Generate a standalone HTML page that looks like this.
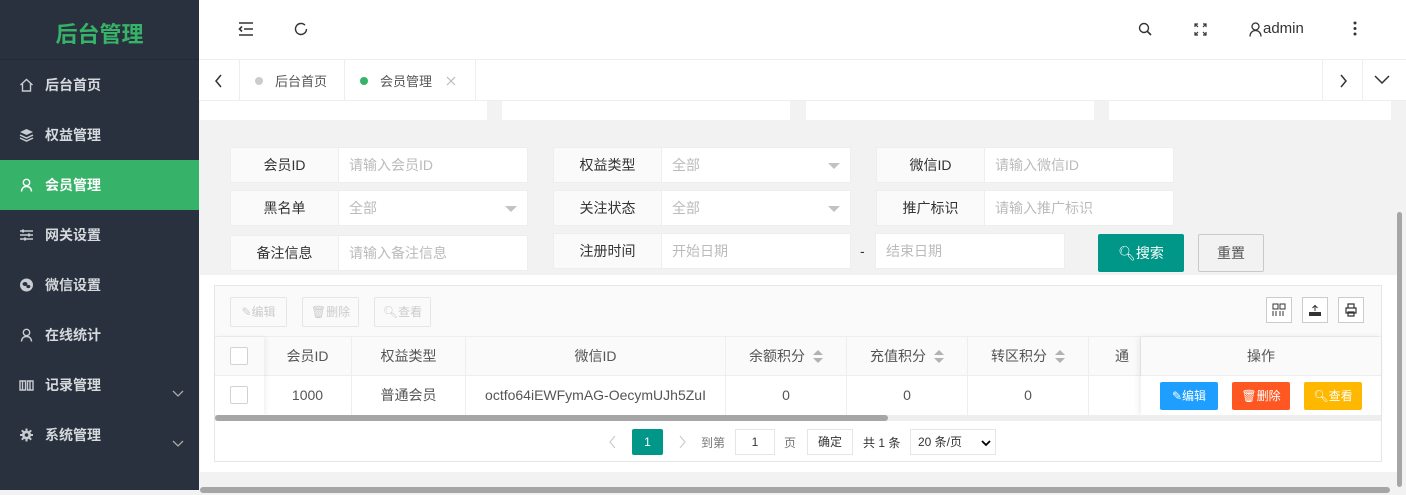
<!DOCTYPE html>
<html><head><meta charset="utf-8"><style>
*{box-sizing:border-box;margin:0;padding:0}
body{width:1406px;height:495px;overflow:hidden;background:#f2f2f2;font-family:"Liberation Sans","Noto Sans CJK SC",sans-serif;font-size:14px;color:#333;position:relative}
.a{position:absolute}
.side{left:0;top:0;width:199px;height:490px;background:#28313d}
.logo{left:0;top:0;width:199px;height:60px;color:#36b368;font-size:22px;font-weight:bold;text-align:center;line-height:70px;border-bottom:1px solid #222a34}
.mi{left:0;width:199px;height:50px;line-height:50px;color:#d6d9dd;font-size:14px;font-weight:bold;padding-left:45px}
.mi svg{position:absolute;left:19px;top:18px}
.mi .ch{position:absolute;left:172px;top:8px}
.act{background:#36b368;color:#fff}
.hdr{left:199px;top:0;width:1207px;height:60px;background:#fff;border-bottom:1px solid #eee}
.tabs{left:199px;top:60px;width:1207px;height:41px;background:#fff;border-bottom:1px solid #eee}
.card{top:101px;height:19px;background:#fff}
.lb{height:36px;background:#fafafa;border:1px solid #eee;text-align:center;line-height:34px;font-size:14px;color:#333}
.in{height:36px;background:#fff;border:1px solid #eee;line-height:34px;padding-left:10px;color:#bbb;font-size:14px}
.sel::after{content:"";position:absolute;right:10px;top:15px;border:6px solid transparent;border-top-color:#c2c2c2}
.th{top:337px;height:39px;border-right:1px solid #eee;border-bottom:1px solid #eee;text-align:center;line-height:39px;color:#555;font-size:14px}
.td{top:376px;height:39px;border-right:1px solid #eee;text-align:center;line-height:39px;color:#555;font-size:14px}
.cb{width:18px;height:18px;border:1px solid #d2d2d2;background:#fff;border-radius:2px}
.tb{top:297px;height:30px;border:1px solid #e6e6e6;color:#ccc;font-size:12px;line-height:28px;text-align:center;border-radius:2px}
.ib{top:297px;width:26px;height:26px;border:1px solid #ccc;background:#fff}
.ob{top:382px;width:58px;height:28px;color:#fff;font-size:12px;line-height:28px;text-align:center;border-radius:2px}
.sort{display:inline-block;vertical-align:middle;margin-left:8px;width:10px;height:14px;position:relative}
.sort::before{content:"";position:absolute;left:0;top:0;border:5px solid transparent;border-top:0;border-bottom:5px solid #b2b2b2}
.sort::after{content:"";position:absolute;left:0;top:8px;border:5px solid transparent;border-bottom:0;border-top:5px solid #b2b2b2}
</style></head><body>
<div class="a side">
<div class="a logo">后台管理</div>
<div class="a mi" style="top:60px"><svg width="15" height="14"><path d="M1.5 7L7.5 1.5 13.5 7M3.5 5.5V13h8V5.5" stroke="#c8ccd2" stroke-width="1.4" fill="none"/></svg>后台首页</div>
<div class="a mi" style="top:110px"><svg width="15" height="14"><path d="M7.5 1L14 4 7.5 7 1 4z" fill="#c8ccd2"/><path d="M1 7l6.5 3 6.5-3M1 10l6.5 3 6.5-3" stroke="#c8ccd2" stroke-width="1.5" fill="none"/></svg>权益管理</div>
<div class="a mi act" style="top:160px"><svg width="15" height="14"><circle cx="7.5" cy="4.5" r="3.2" stroke="#fff" stroke-width="1.4" fill="none"/><path d="M2.5 13.5c0-3 2-5 5-5s5 2 5 5" stroke="#fff" stroke-width="1.4" fill="none"/></svg>会员管理</div>
<div class="a mi" style="top:210px"><svg width="15" height="14"><path d="M1 3h13M1 7h13M1 11h13" stroke="#c8ccd2" stroke-width="1.4"/><path d="M4 1.5v3M10 5.5v3M6 9.5v3" stroke="#c8ccd2" stroke-width="2"/></svg>网关设置</div>
<div class="a mi" style="top:260px"><svg width="15" height="14"><circle cx="7.5" cy="7" r="6.5" fill="#c8ccd2"/><ellipse cx="6" cy="6" rx="2.5" ry="2" fill="#28313d"/><ellipse cx="9.3" cy="8.5" rx="2" ry="1.6" fill="#28313d"/></svg>微信设置</div>
<div class="a mi" style="top:310px"><svg width="15" height="14"><circle cx="7.5" cy="4.5" r="3.2" stroke="#c8ccd2" stroke-width="1.4" fill="none"/><path d="M2.5 13.5c0-3 2-5 5-5s5 2 5 5" stroke="#c8ccd2" stroke-width="1.4" fill="none"/></svg>在线统计</div>
<div class="a mi" style="top:360px"><svg width="15" height="14"><path d="M1 3h5.5v9H1zM8.5 3H14v9H8.5zM3.5 3v9M11 3v9" stroke="#c8ccd2" stroke-width="1.4" fill="none"/></svg>记录管理<svg class="ch" width="12" height="8" style="left:172px;top:30px"><path d="M1 1l5 5 5-5" stroke="#aaa" stroke-width="1.3" fill="none"/></svg></div>
<div class="a mi" style="top:410px"><svg width="15" height="14"><circle cx="7.5" cy="7" r="4.5" fill="#c8ccd2"/><path d="M7.5 0.5v13M1 7h13M2.8 2.3l9.4 9.4M12.2 2.3l-9.4 9.4" stroke="#c8ccd2" stroke-width="2"/><circle cx="7.5" cy="7" r="1.8" fill="#28313d"/></svg>系统管理<svg class="ch" width="12" height="8" style="left:172px;top:30px"><path d="M1 1l5 5 5-5" stroke="#aaa" stroke-width="1.3" fill="none"/></svg></div>
</div>
<div class="a hdr"></div>
<svg class="a" style="left:238px;top:22px" width="16" height="14"><path d="M1 1h14M6 7h9M1 13h14M4 4.5L1.5 7L4 9.5" stroke="#333" stroke-width="1.6" fill="none"/></svg>
<svg class="a" style="left:294px;top:22px" width="14" height="14"><path d="M11 3.2A5.5 5.5 0 1 0 12.5 7" stroke="#333" stroke-width="1.4" fill="none"/></svg>
<svg class="a" style="left:1138px;top:22px" width="14" height="14"><circle cx="6" cy="6" r="4.5" stroke="#333" stroke-width="1.4" fill="none"/><path d="M9.5 9.5L13 13" stroke="#333" stroke-width="1.6"/></svg>
<svg class="a" style="left:1194px;top:23px" width="13" height="13"><path d="M1 4V1h3M9 1h3v3M12 9v3H9M4 12H1V9M1 1l3 3M12 1L9 4M12 12L9 9M1 12l3-3" stroke="#333" stroke-width="1.2" fill="none"/></svg>
<svg class="a" style="left:1249px;top:22px" width="13" height="15"><circle cx="6.5" cy="4.5" r="3.5" stroke="#333" stroke-width="1.3" fill="none"/><path d="M1 14.5c0-3.5 2.3-6 5.5-6s5.5 2.5 5.5 6" stroke="#333" stroke-width="1.3" fill="none"/></svg>
<div class="a" style="left:1263px;top:20px;font-size:15px;color:#333">admin</div>
<svg class="a" style="left:1353px;top:21px" width="4" height="15"><circle cx="2" cy="2" r="1.5" fill="#333"/><circle cx="2" cy="7.5" r="1.5" fill="#333"/><circle cx="2" cy="13" r="1.5" fill="#333"/></svg>
<div class="a tabs"></div>
<div class="a" style="left:239px;top:60px;width:1px;height:41px;background:#eee"></div>
<div class="a" style="left:344px;top:60px;width:1px;height:41px;background:#eee"></div>
<div class="a" style="left:475px;top:60px;width:1px;height:41px;background:#eee"></div>
<div class="a" style="left:1322px;top:60px;width:1px;height:41px;background:#eee"></div>
<div class="a" style="left:1362px;top:60px;width:1px;height:41px;background:#eee"></div>
<svg class="a" style="left:214px;top:74px" width="10" height="14"><path d="M7 1L2 7l5 6" stroke="#333" stroke-width="1.5" fill="none"/></svg>
<svg class="a" style="left:1338px;top:74px" width="10" height="14"><path d="M3 1l5 6-5 6" stroke="#333" stroke-width="1.5" fill="none"/></svg>
<svg class="a" style="left:1374px;top:74px" width="16" height="10"><path d="M1 2l7 7 7-7" stroke="#333" stroke-width="1.5" fill="none"/></svg>
<div class="a" style="left:255px;top:77px;width:8px;height:8px;border-radius:50%;background:#ccc"></div>
<div class="a" style="left:275px;top:71px;font-size:13px;color:#555">后台首页</div>
<div class="a" style="left:360px;top:77px;width:8px;height:8px;border-radius:50%;background:#36b368"></div>
<div class="a" style="left:380px;top:71px;font-size:13px;color:#555">会员管理</div>
<svg class="a" style="left:446px;top:76px" width="10" height="10"><path d="M1 1l8 8M9 1L1 9" stroke="#bbb" stroke-width="1.2"/></svg>
<div class="a card" style="left:200px;width:287px"></div>
<div class="a card" style="left:502px;width:288px"></div>
<div class="a card" style="left:806px;width:288px"></div>
<div class="a card" style="left:1109px;width:282px"></div>

<div class="a lb" style="left:230px;top:147px;width:109px">会员ID</div><div class="a in" style="left:338px;top:147px;width:190px">请输入会员ID</div>
<div class="a lb" style="left:553px;top:147px;width:109px">权益类型</div><div class="a in sel" style="left:661px;top:147px;width:190px">全部</div>
<div class="a lb" style="left:876px;top:147px;width:109px">微信ID</div><div class="a in" style="left:984px;top:147px;width:190px">请输入微信ID</div>
<div class="a lb" style="left:230px;top:190px;width:109px">黑名单</div><div class="a in sel" style="left:338px;top:190px;width:190px">全部</div>
<div class="a lb" style="left:553px;top:190px;width:109px">关注状态</div><div class="a in sel" style="left:661px;top:190px;width:190px">全部</div>
<div class="a lb" style="left:876px;top:190px;width:109px">推广标识</div><div class="a in" style="left:984px;top:190px;width:190px">请输入推广标识</div>
<div class="a lb" style="left:230px;top:235px;width:109px">备注信息</div><div class="a in" style="left:338px;top:235px;width:190px">请输入备注信息</div>
<div class="a lb" style="left:553px;top:233px;width:109px">注册时间</div><div class="a in" style="left:661px;top:233px;width:190px">开始日期</div>
<div class="a" style="left:860px;top:243px;color:#333">-</div>
<div class="a in" style="left:875px;top:233px;width:190px">结束日期</div>
<div class="a" style="left:1098px;top:234px;width:86px;height:38px;background:#009688;color:#fff;line-height:38px;text-align:center;border-radius:2px">🔍︎搜索</div>
<div class="a" style="left:1198px;top:234px;width:66px;height:38px;background:#f2f2f2;border:1px solid #c9c9c9;color:#555;line-height:36px;text-align:center;border-radius:2px">重置</div>
<div class="a" style="left:200px;top:275px;width:1197px;height:197px;background:#fff"></div>
<div class="a" style="left:214px;top:285px;width:1168px;height:177px;border:1px solid #e6e6e6;background:#fff"></div>
<div class="a" style="left:215px;top:286px;width:1166px;height:51px;background:#fafafa;border-bottom:1px solid #eee"></div>
<div class="a tb" style="left:230px;width:57px">✎编辑</div>
<div class="a tb" style="left:302px;width:57px">🗑︎删除</div>
<div class="a tb" style="left:374px;width:57px">🔍︎查看</div>
<div class="a ib" style="left:1266px"></div><div class="a ib" style="left:1302px"></div><div class="a ib" style="left:1338px"></div>
<svg class="a" style="left:1272px;top:303px" width="14" height="14"><path d="M1 1h5v5H1zM8 1h5v5H8zM1 8v5M4 8v5M8 8v5M11 8v5" stroke="#333" fill="none"/></svg>
<svg class="a" style="left:1308px;top:303px" width="14" height="14"><path d="M1 9h12v4H1z" fill="#333"/><path d="M7 8V3M4.5 5L7 2.5 9.5 5" stroke="#333" fill="none"/></svg>
<svg class="a" style="left:1344px;top:303px" width="14" height="14"><path d="M4 5V1h6v4M2 5h10v5H2zM4 9h6v4H4z" stroke="#333" stroke-width="1.2" fill="none"/></svg>
<div class="a th" style="left:264px;width:88px;background:#fafafa">会员ID</div>
<div class="a th" style="left:352px;width:114px;background:#fafafa">权益类型</div>
<div class="a th" style="left:466px;width:260px;background:#fafafa">微信ID</div>
<div class="a th" style="left:726px;width:121px;background:#fafafa">余额积分<span class="sort"></span></div>
<div class="a th" style="left:847px;width:121px;background:#fafafa">充值积分<span class="sort"></span></div>
<div class="a th" style="left:968px;width:121px;background:#fafafa">转区积分<span class="sort"></span></div>
<div class="a th" style="left:1089px;width:52px;background:#fafafa;text-align:left;padding-left:26px;overflow:hidden">通区</div>
<div class="a td" style="left:264px;width:88px">1000</div>
<div class="a td" style="left:352px;width:114px">普通会员</div>
<div class="a td" style="left:466px;width:260px">octfo64iEWFymAG-OecymUJh5ZuI</div>
<div class="a td" style="left:726px;width:121px">0</div>
<div class="a td" style="left:847px;width:121px">0</div>
<div class="a td" style="left:968px;width:121px">0</div>
<div class="a" style="left:215px;top:337px;width:49px;height:78px;background:#fff;box-shadow:2px 0 5px rgba(0,0,0,.06)"></div>
<div class="a th" style="left:215px;width:49px;background:#fafafa;border-right:0"><div class="cb a" style="left:15px;top:10px"></div></div>
<div class="a td" style="left:215px;width:49px;border-right:0"><div class="cb a" style="left:15px;top:10px"></div></div>
<div class="a" style="left:1141px;top:337px;width:240px;height:78px;background:#fff;box-shadow:-2px 0 6px rgba(0,0,0,.08)"></div>
<div class="a th" style="left:1141px;width:240px;background:#fafafa;border-right:0">操作</div>
<div class="a ob" style="left:1160px;background:#1e9fff">✎编辑</div>
<div class="a ob" style="left:1232px;background:#ff5722">🗑︎删除</div>
<div class="a ob" style="left:1304px;background:#ffb800">🔍︎查看</div>
<div class="a" style="left:215px;top:415px;width:1166px;height:6px;background:#eee"></div>
<div class="a" style="left:215px;top:415px;width:673px;height:6px;background:#a6a6a6;border-radius:3px"></div>
<svg class="a" style="left:609px;top:435px" width="8" height="14"><path d="M6 1L1 7l5 6" stroke="#ccc" stroke-width="1.2" fill="none"/></svg>
<div class="a" style="left:632px;top:429px;width:31px;height:26px;background:#009688;color:#fff;text-align:center;line-height:26px;font-size:12px;border-radius:2px">1</div>
<svg class="a" style="left:678px;top:435px" width="8" height="14"><path d="M2 1l5 6-5 6" stroke="#ccc" stroke-width="1.2" fill="none"/></svg>
<div class="a" style="left:701px;top:434px;color:#777;font-size:12px">到第</div>
<div class="a" style="left:735px;top:429px;width:40px;height:26px;border:1px solid #e6e6e6;text-align:center;line-height:24px;font-size:12px">1</div>
<div class="a" style="left:784px;top:434px;color:#777;font-size:12px">页</div>
<div class="a" style="left:807px;top:429px;width:46px;height:26px;border:1px solid #e6e6e6;text-align:center;line-height:24px;font-size:12px;color:#333">确定</div>
<div class="a" style="left:863px;top:434px;color:#333;font-size:12px">共 1 条</div>
<div class="a" style="left:910px;top:429px;width:86px;height:26px;border:1px solid #e6e6e6;line-height:24px;font-size:12px;padding-left:7px;color:#333">20 条/页<svg class="a" style="left:70px;top:10px" width="10" height="7"><path d="M1 1l4 4 4-4" stroke="#000" stroke-width="1.8" fill="none"/></svg></div>
<div class="a" style="left:200px;top:487px;width:1190px;height:6px;background:#a6a6a6;border-radius:3px"></div>
<div class="a" style="left:1397px;top:212px;width:5px;height:275px;background:#a6a6a6;border-radius:3px"></div>
</body></html>
